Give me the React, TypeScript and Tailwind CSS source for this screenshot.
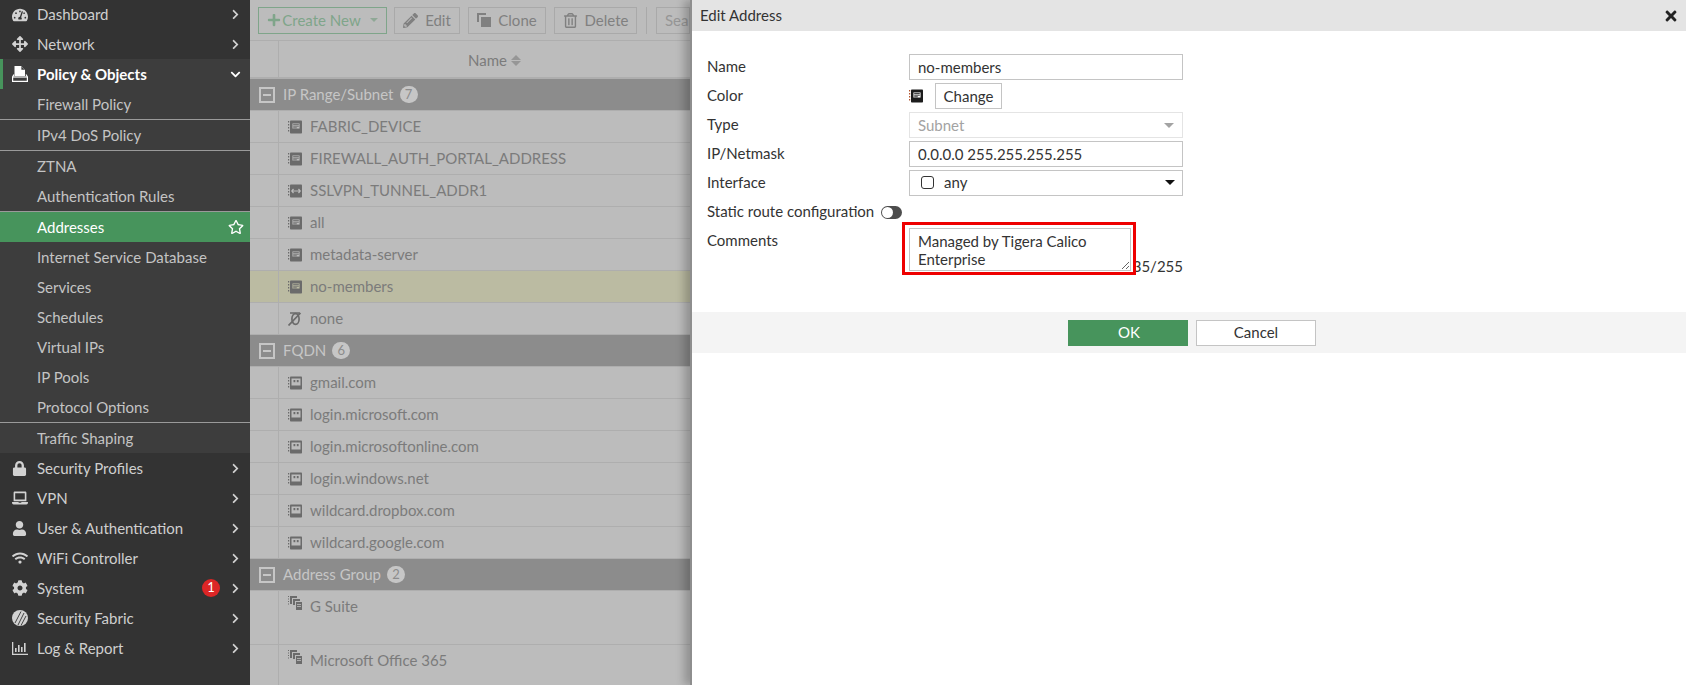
import type { ReactNode } from "react";
import {
  FaArrowsAlt,
  FaChevronDown,
  FaChevronRight,
  FaCog,
  FaLaptop,
  FaLock,
  FaPencilAlt,
  FaPlus,
  FaRegStar,
  FaRegTrashAlt,
  FaTachometerAlt,
  FaTimes,
  FaUser,
  FaWifi,
} from "react-icons/fa";

function PolicyIcon() {
  return (
    <svg width="16" height="16" viewBox="0 0 16 16" fill="currentColor">
      <path d="M2.5 0h6.5l4 4v6H2.5z" />
      <path d="M9.4 0.4v3.4h3.4z" fill="#3d3d3d" />
      <path d="M2 8.5 L0.6 11 v4.4 h14.8 V11 L14 8.5" fill="none" stroke="currentColor" strokeWidth="1.2" />
      <path d="M1 11h14" stroke="currentColor" strokeWidth="1.2" />
    </svg>
  );
}

function FabricIcon() {
  return (
    <svg width="16" height="16" viewBox="0 0 16 16">
      <circle cx="8" cy="8" r="8" fill="currentColor" />
      <path d="M6 15 L12 3 M9 15.5 L14 6 M3 13 L9 1.5" stroke="#333333" strokeWidth="0.9" />
    </svg>
  );
}

function LogIcon() {
  return (
    <svg width="16" height="16" viewBox="0 0 16 16" fill="currentColor">
      <path d="M0 2h1.3v11.7H16V15H0z" />
      <rect x="3" y="8" width="1.6" height="4" />
      <rect x="6" y="5" width="1.6" height="7" />
      <rect x="9" y="7" width="1.6" height="5" />
      <rect x="12" y="3" width="1.6" height="9" />
    </svg>
  );
}

type AddrKind = "subnet" | "range" | "fqdn" | "none" | "group";

function AddrIcon({ kind, spine = "#6b6b6b", body = "#6b6b6b", line = "#bcbcbc" }: { kind: AddrKind; spine?: string; body?: string; line?: string }) {
  if (kind === "none") {
    return (
      <svg width="14" height="14" viewBox="0 0 14 14" fill="none" stroke={body} strokeWidth="1.7">
        <ellipse cx="7.5" cy="7" rx="3.6" ry="5.4" />
        <path d="M0.5 13.5 L12.5 1 M2 1h10" />
      </svg>
    );
  }
  if (kind === "group") {
    return (
      <svg width="14" height="14" viewBox="0 0 14 14" fill={body}>
        <path d="M0 0h1v1H0zM0 2.5h1v1H0zM0 5h1v1H0zM0 7.5h1v1H0z" />
        <path d="M2 0h7v2H4v6H2z" />
        <path d="M5 3h7v2H7v4H5z" />
        <rect x="8" y="6" width="6" height="8" />
        <path d="M9 8.5h4M9 10.5h4" stroke={line} strokeWidth="0.8" />
      </svg>
    );
  }
  return (
    <svg width="14" height="14" viewBox="0 0 14 14">
      <path d="M0 1h1.2v1.6H0zM0 4h1.2v1.6H0zM0 7h1.2v1.6H0zM0 10h1.2v1.6H0z" fill={spine} />
      <rect x="2" y="0.5" width="12" height="13" rx="0.8" fill={body} />
      {kind === "subnet" && (
        <path d="M4 3h8v6H4z M5.2 4.6h5.6M5.2 6.2h5.6M5.2 7.8h3.6" fill={line} stroke={body} strokeWidth="0.9" />
      )}
      {kind === "range" && <path d="M4 7h8M5.5 5L3.8 7l1.7 2M10.5 5l1.7 2-1.7 2" fill="none" stroke={line} strokeWidth="1.2" />}
      {kind === "fqdn" && (
        <>
          <path d="M3.5 2.5h9v7h-9z" fill={line} />
          <rect x="5.5" y="4" width="1.8" height="2.2" fill={body} />
          <rect x="8.8" y="4" width="1.8" height="2.2" fill={body} />
        </>
      )}
    </svg>
  );
}

function NavItem({ icon, label, h = "h-[30px]", badge }: { icon: ReactNode; label: string; h?: string; badge?: string }) {
  return (
    <div className={`flex ${h} items-center pl-3 pr-[9px] text-[#cfcfcf]`}>
      <span className="flex w-[25px] justify-start text-[#d2d2d2]">{icon}</span>
      <span className="flex-1">{label}</span>
      {badge && (
        <span className="mr-[10px] flex h-[18px] w-[18px] items-center justify-center rounded-full bg-[#dc2626] text-[13px] text-white">
          {badge}
        </span>
      )}
      <FaChevronRight size={11} className="text-[#d2d2d2]" />
    </div>
  );
}

function SubItem({ label, line, active }: { label: string; line?: boolean; active?: boolean }) {
  return (
    <div
      className={`flex items-center pl-[37px] pr-[6px] ${line ? "h-[31px] border-b border-[#9a9a9a]" : "h-[30px]"} ${
        active ? "bg-[#47945c] text-white" : "text-[#c4c4c4]"
      }`}
    >
      <span className="flex-1">{label}</span>
      {active && <FaRegStar size={16} className="text-white" />}
    </div>
  );
}

function Sidebar() {
  return (
    <aside className="h-full w-[250px] shrink-0 overflow-hidden bg-[#333333]">
      <NavItem h="h-[29px]" icon={<FaTachometerAlt size={16} />} label="Dashboard" />
      <NavItem icon={<FaArrowsAlt size={16} />} label="Network" />
      <div className="bg-[#3d3d3d]">
        <div className="flex h-[30px] items-center border-l-[3px] border-[#47945c] pl-[9px] pr-[9px] font-bold text-white">
          <span className="flex w-[25px]">
            <PolicyIcon />
          </span>
          <span className="flex-1">Policy &amp; Objects</span>
          <FaChevronDown size={11} />
        </div>
        <SubItem label="Firewall Policy" line />
        <SubItem label="IPv4 DoS Policy" line />
        <SubItem label="ZTNA" />
        <SubItem label="Authentication Rules" line />
        <SubItem label="Addresses" active />
        <SubItem label="Internet Service Database" />
        <SubItem label="Services" />
        <SubItem label="Schedules" />
        <SubItem label="Virtual IPs" />
        <SubItem label="IP Pools" />
        <SubItem label="Protocol Options" line />
        <SubItem label="Traffic Shaping" />
      </div>
      <NavItem icon={<FaLock size={15} />} label="Security Profiles" />
      <NavItem icon={<FaLaptop size={16} />} label="VPN" />
      <NavItem icon={<FaUser size={15} />} label="User & Authentication" />
      <NavItem icon={<FaWifi size={16} />} label="WiFi Controller" />
      <NavItem icon={<FaCog size={16} />} label="System" badge="1" />
      <NavItem icon={<FabricIcon />} label="Security Fabric" />
      <NavItem icon={<LogIcon />} label="Log & Report" />
    </aside>
  );
}

function ToolButton({ w, children }: { w: string; children: ReactNode }) {
  return (
    <div className={`flex h-[27px] ${w} shrink-0 items-center justify-center gap-[7px] border border-[#a9a9a9] text-[#808080]`}>{children}</div>
  );
}

function GroupRow({ label, count }: { label: string; count: string }) {
  return (
    <div className="flex h-[32px] items-center border-b border-[#aeaeae] bg-[#8c8c8c] pl-[9px] text-[#c6c6c6]">
      <span className="flex h-[16px] w-[16px] items-center justify-center bg-[#c6c6c6]">
        <span className="flex h-[12px] w-[12px] items-center bg-[#8c8c8c] px-[2px]">
          <span className="block h-[2px] w-full bg-[#c6c6c6]" />
        </span>
      </span>
      <span className="ml-2">{label}</span>
      <span className="ml-[6px] flex h-[17px] w-[18px] items-center justify-center rounded-full bg-[#c6c6c6] text-[13px] text-[#8c8c8c]">
        {count}
      </span>
    </div>
  );
}

function AddrRow({ kind, name, h = "h-[32px]", selected, top }: { kind: AddrKind; name: string; h?: string; selected?: boolean; top?: boolean }) {
  return (
    <div className={`flex ${h} border-b border-[#aeaeae] ${selected ? "bg-[#bbbba2]" : ""}`}>
      <div className="w-[29px] shrink-0 border-r border-[#aeaeae]" />
      <div className={`flex flex-1 gap-[8px] pl-[9px] text-[#7b7b7b] ${top ? "items-start pt-[5px]" : "items-center"}`}>
        <AddrIcon kind={kind} line={selected ? "#bbbba2" : "#bcbcbc"} />
        <span className={top ? "-mt-[1px]" : ""}>{name}</span>
      </div>
    </div>
  );
}

function AddressTable() {
  return (
    <div className="h-full min-w-0 flex-1 overflow-hidden bg-[#bcbcbc]">
      <div className="flex h-[41px] items-center border-b border-[#aeaeae] pl-2">
        <div className="flex h-[27px] w-[129px] shrink-0 items-center justify-center border border-[#7fa58a] text-[#7fa58a]">
          <FaPlus size={14} className="mr-[1px]" />
          <span>Create New</span>
          <span className="ml-[9px] border-x-[4px] border-t-[4px] border-x-transparent border-t-[#8fa896]" />
        </div>
        <div className="ml-[7px]">
          <ToolButton w="w-[66px]">
            <FaPencilAlt size={15} />
            <span>Edit</span>
          </ToolButton>
        </div>
        <div className="ml-2">
          <ToolButton w="w-[78px]">
            <span className="relative h-[14px] w-[14px]">
              <span className="absolute left-0 top-0 h-[9px] w-[9px] border-l-2 border-t-2 border-[#808080]" />
              <span className="absolute bottom-0 right-0 h-[10px] w-[10px] bg-[#808080]" />
            </span>
            <span>Clone</span>
          </ToolButton>
        </div>
        <div className="ml-2">
          <ToolButton w="w-[83px]">
            <FaRegTrashAlt size={15} />
            <span>Delete</span>
          </ToolButton>
        </div>
        <div className="ml-[9px] h-[27px] w-px shrink-0 bg-[#a9a9a9]" />
        <div className="ml-[9px] flex h-[27px] min-w-0 flex-1 items-center overflow-hidden whitespace-nowrap border border-[#a9a9a9] pl-2 text-[#969696]">
          Search
        </div>
      </div>
      <div className="flex h-[38px] border-b-2 border-[#aeaeae]">
        <div className="w-[29px] shrink-0 border-r border-[#aeaeae]" />
        <div className="flex w-[431px] shrink-0 items-center justify-center gap-1 pt-[2px] text-[#7b7b7b]">
          <span>Name</span>
          <span className="flex flex-col gap-[1px]">
            <span className="border-x-[5px] border-b-[5px] border-x-transparent border-b-[#969696]" />
            <span className="border-x-[5px] border-t-[5px] border-x-transparent border-t-[#969696]" />
          </span>
        </div>
      </div>
      <GroupRow label="IP Range/Subnet" count="7" />
      <AddrRow kind="subnet" name="FABRIC_DEVICE" />
      <AddrRow kind="subnet" name="FIREWALL_AUTH_PORTAL_ADDRESS" />
      <AddrRow kind="range" name="SSLVPN_TUNNEL_ADDR1" />
      <AddrRow kind="subnet" name="all" />
      <AddrRow kind="subnet" name="metadata-server" />
      <AddrRow kind="subnet" name="no-members" selected />
      <AddrRow kind="none" name="none" />
      <GroupRow label="FQDN" count="6" />
      <AddrRow kind="fqdn" name="gmail.com" />
      <AddrRow kind="fqdn" name="login.microsoft.com" />
      <AddrRow kind="fqdn" name="login.microsoftonline.com" />
      <AddrRow kind="fqdn" name="login.windows.net" />
      <AddrRow kind="fqdn" name="wildcard.dropbox.com" />
      <AddrRow kind="fqdn" name="wildcard.google.com" />
      <GroupRow label="Address Group" count="2" />
      <AddrRow kind="group" name="G Suite" h="h-[54px]" top />
      <AddrRow kind="group" name="Microsoft Office 365" h="h-[54px]" top />
    </div>
  );
}

function Field({ label, children }: { label: string; children: ReactNode }) {
  return (
    <div className="flex h-[26px] items-center">
      <label className="w-[202px] shrink-0 pb-[2px]">{label}</label>
      {children}
    </div>
  );
}

function EditPanel() {
  return (
    <div className="relative flex h-full w-[996px] shrink-0 flex-col border-l-2 border-[#8e8e8e] bg-white text-[#333333] shadow-[-6px_0_8px_rgba(0,0,0,0.22)]">
      <div className="flex h-[31px] shrink-0 items-center justify-between bg-[#e4e4e4] pl-2 pr-[7px]">
        <span>Edit Address</span>
        <FaTimes size={16} className="text-[#222222]" />
      </div>
      <form className="flex flex-col gap-[3px] pl-[15px] pt-[23px]">
        <Field label="Name">
          <input readOnly value="no-members" className="h-[26px] w-[274px] border border-[#c4c4c4] px-2 outline-none" />
        </Field>
        <Field label="Color">
          <span className="flex w-[26px]">
            <AddrIcon kind="subnet" spine="#b4552d" body="#1c1c1c" line="#ffffff" />
          </span>
          <button type="button" className="h-[26px] w-[67px] border border-[#c4c4c4]">
            Change
          </button>
        </Field>
        <Field label="Type">
          <div className="flex h-[26px] w-[274px] items-center justify-between border border-[#e4e4e4] pl-2 pr-[8px] text-[#a3a3a3]">
            <span>Subnet</span>
            <span className="border-x-[5px] border-t-[5px] border-x-transparent border-t-[#a3a3a3]" />
          </div>
        </Field>
        <Field label="IP/Netmask">
          <input readOnly value="0.0.0.0 255.255.255.255" className="h-[26px] w-[274px] border border-[#c4c4c4] px-2 outline-none" />
        </Field>
        <Field label="Interface">
          <div className="flex h-[26px] w-[274px] items-center border border-[#c4c4c4] pb-[1px] pl-[11px] pr-[7px]">
            <span className="h-[13px] w-[13px] rounded-[3px] border border-[#333333]" />
            <span className="ml-[10px] flex-1">any</span>
            <span className="border-x-[5px] border-t-[5px] border-x-transparent border-t-[#111111]" />
          </div>
        </Field>
        <div className="flex h-[26px] items-center">
          <span className="pb-[2px]">Static route configuration</span>
          <span className="ml-[7px] flex h-[13px] w-[21px] items-center rounded-full bg-[#4d4d4d] pl-[1px]">
            <span className="h-[11px] w-[11px] rounded-full bg-white" />
          </span>
        </div>
        <div className="relative flex h-[43px]">
          <label className="w-[202px] shrink-0 pt-[1px]">Comments</label>
          <textarea
            readOnly
            value="Managed by Tigera Calico Enterprise"
            className="h-[43px] w-[222px] border border-[#c4c4c4] px-2 py-[3px] leading-[18px] outline-none"
          />
          <span className="w-[52px] self-end text-right leading-[10px]">35/255</span>
          <div className="pointer-events-none absolute left-[195px] top-[-6px] h-[53px] w-[234px] border-[3px] border-[#ee0000]" />
        </div>
      </form>
      <div className="mt-[41px] flex h-[41px] items-center justify-center gap-2 bg-[#f4f4f4] pl-[5px]">
        <button type="button" className="h-[26px] w-[120px] bg-[#47945c] pl-[3px] text-white">
          OK
        </button>
        <button type="button" className="h-[26px] w-[120px] border border-[#c4c4c4] bg-white pl-[1px]">
          Cancel
        </button>
      </div>
    </div>
  );
}

export default function App() {
  return (
    <div className="flex h-[685px] w-[1686px] overflow-hidden bg-white font-['Lato',sans-serif] text-[15px]">
      <Sidebar />
      <main className="flex min-w-0 flex-1 overflow-hidden">
        <AddressTable />
        <EditPanel />
      </main>
    </div>
  );
}
